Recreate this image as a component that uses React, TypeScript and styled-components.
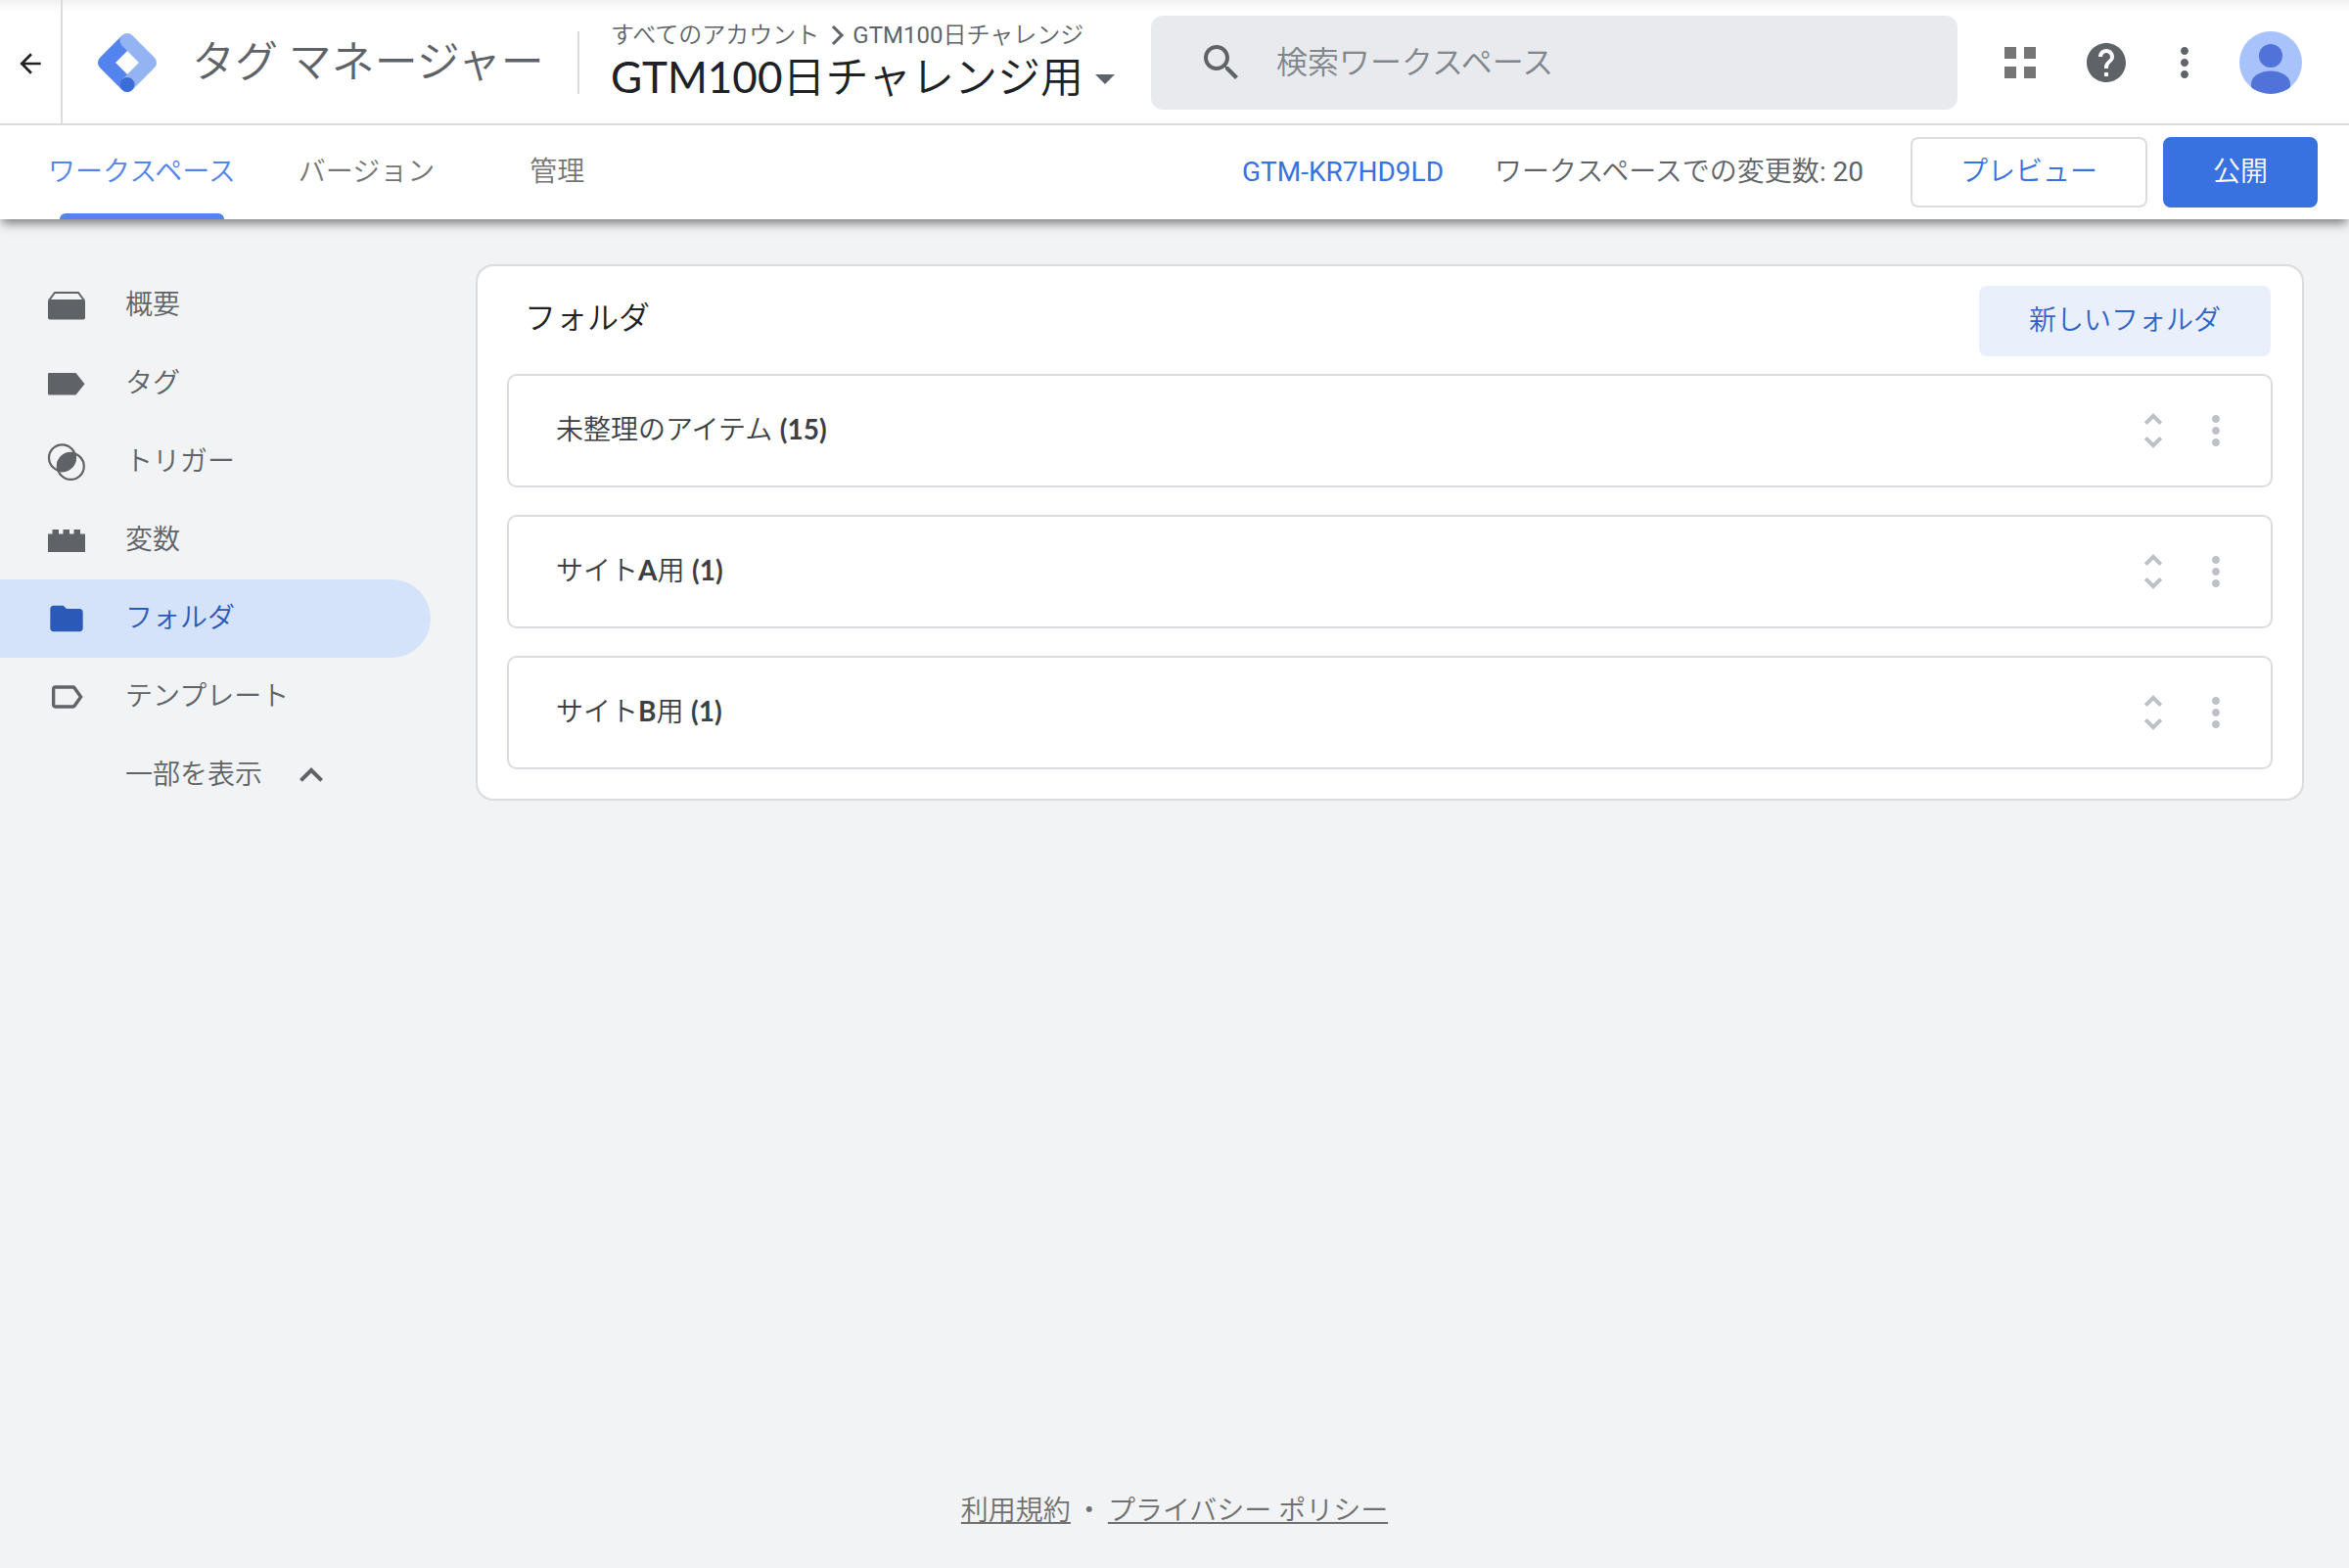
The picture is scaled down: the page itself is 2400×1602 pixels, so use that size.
import React from "react";
import styled, { createGlobalStyle } from "styled-components";

const color = {
  page: "#f1f3f4",
  line: "#dadce0",
  text: "#5f6368",
  muted: "#757575",
  strong: "#202124",
  row: "#3c4043",
  faint: "#bdc1c6",
  accent: "#5383ec",
  link: "#3871e0",
};

const sans = `Roboto, "Noto Sans CJK JP", sans-serif`;
const display = `Lato, "Noto Sans CJK JP", sans-serif`;

const GlobalStyle = createGlobalStyle`
  * { box-sizing: border-box; }
  body {
    margin: 0;
    background: ${color.page};
    color: ${color.text};
    font-family: ${sans};
    font-size: 28px;
    font-weight: 350;
    line-height: 40px;
  }
  button, input { font: inherit; color: inherit; }
  h1, h2, p, ul { margin: 0; padding: 0; font: inherit; }
  ul { list-style: none; }
  a { color: inherit; text-decoration: none; }
  svg { display: block; fill: currentColor; flex: none; }
`;

const Page = styled.div`
  display: flex;
  flex-direction: column;
  min-height: 100vh;
`;

const Latin = styled.span<{ $weight: number }>`
  font-weight: ${(p) => p.$weight};
`;

/* Japanese stays light, Latin runs take their own weight. */
function Mixed({ text, weight = 400 }: { text: string; weight?: number }) {
  return (
    <>
      {text.split(/([\x21-\x7e]+)/).map((part, i) =>
        i % 2 ? (
          <Latin key={i} $weight={weight}>
            {part}
          </Latin>
        ) : (
          part
        )
      )}
    </>
  );
}

/* ---------- header ---------- */

const Top = styled.div`
  position: relative;
  background: #fff;
  box-shadow: 0 6px 10px -2px rgba(0, 0, 0, 0.5);
`;

const AppBar = styled.header`
  display: flex;
  align-items: center;
  height: 128px;
  padding: 2px 48px 0 0;
  border-bottom: 2px solid ${color.line};
  background: linear-gradient(#f1f1f1, #fff 12px);
`;

const IconButton = styled.button<{ $width?: number; $color?: string }>`
  display: flex;
  align-items: center;
  justify-content: center;
  flex: none;
  width: ${(p) => p.$width ?? 48}px;
  height: 48px;
  padding: 0;
  border: 0;
  background: none;
  color: ${(p) => p.$color ?? color.text};
  cursor: pointer;
`;

const BackCell = styled.div`
  display: flex;
  align-items: center;
  align-self: stretch;
  width: 64px;
  margin-top: -2px;
  padding-top: 4px;
  border-right: 2px solid ${color.line};
`;

const Brand = styled.a`
  display: flex;
  align-items: center;
  gap: 36px;
  width: 528px;
  height: 64px;
  padding-left: 36px;
  border-right: 2px solid ${color.line};
  font-size: 44px;
  white-space: nowrap;
`;

const Account = styled.div`
  flex: none;
  width: 584px;
  padding: 0 0 4px 32px;
  white-space: nowrap;
`;

const Crumbs = styled.nav`
  display: flex;
  align-items: center;
  font-size: 24px;
  line-height: 32px;
`;

const Container = styled.button`
  display: flex;
  align-items: center;
  gap: 12px;
  padding: 0;
  border: 0;
  background: none;
  color: ${color.strong};
  font-family: ${display};
  font-size: 44px;
  line-height: 52px;
  cursor: pointer;
  svg {
    margin-top: 6px;
    color: ${color.text};
  }
`;

const Search = styled.label`
  display: flex;
  align-items: center;
  flex: 1;
  gap: 32px;
  height: 96px;
  padding: 0 48px;
  border-radius: 12px;
  background: #e8eaed;
`;

const SearchInput = styled.input`
  flex: 1;
  min-width: 0;
  padding: 0;
  border: 0;
  outline: 0;
  background: none;
  font-size: 32px;
  &::placeholder { color: #80868b; opacity: 1; }
`;

const Tools = styled.div`
  display: flex;
  align-items: center;
  gap: 32px;
  padding-left: 32px;
`;

const Avatar = styled.button`
  width: 64px;
  height: 64px;
  padding: 0;
  border: 0;
  border-radius: 50%;
  overflow: hidden;
  background: #a8c2fb;
  color: #5072d9;
  cursor: pointer;
`;

/* ---------- tab bar ---------- */

const TabBar = styled.div`
  display: flex;
  align-items: center;
  justify-content: space-between;
  height: 96px;
  padding: 0 32px 0 19px;
`;

const Tabs = styled.nav`
  display: flex;
  align-self: stretch;
  gap: 4px;
`;

const Tab = styled.a<{ $active?: boolean }>`
  position: relative;
  display: flex;
  justify-content: center;
  align-items: center;
  min-width: 182px;
  padding: 0 30px;
  color: ${(p) => (p.$active ? color.accent : color.muted)};
  &::after {
    content: "";
    display: ${(p) => (p.$active ? "block" : "none")};
    position: absolute;
    left: 42px;
    right: 42px;
    bottom: 0;
    height: 6px;
    border-radius: 6px 6px 0 0;
    background: ${color.accent};
  }
`;

const Actions = styled.div`
  display: flex;
  align-items: center;
  gap: 16px;
`;

const ContainerId = styled.a`
  margin-right: 36px;
  color: ${color.link};
  font-weight: 400;
`;

const Changes = styled.p`
  margin-right: 32px;
`;

const Button = styled.button<{ $kind: "outline" | "solid" | "tonal" }>`
  height: 72px;
  padding: 0 49px;
  border: 2px solid
    ${(p) => ({ outline: color.line, solid: color.link, tonal: "#e9f0fc" }[p.$kind])};
  border-radius: 8px;
  background: ${(p) => ({ outline: "#fff", solid: color.link, tonal: "#e9f0fc" }[p.$kind])};
  color: ${(p) => ({ outline: color.link, solid: "#fff", tonal: "#2f62cd" }[p.$kind])};
  white-space: nowrap;
  cursor: pointer;
`;

/* ---------- body ---------- */

const Body = styled.div`
  display: flex;
  align-items: flex-start;
  flex: 1;
  padding: 46px 46px 0 0;
`;

const Side = styled.nav`
  flex: none;
  width: 486px;
  padding-top: 2px;
`;

const SideItem = styled.a<{ $active?: boolean }>`
  display: flex;
  align-items: center;
  gap: 40px;
  width: 440px;
  height: 80px;
  padding-left: 48px;
  border-radius: 0 40px 40px 0;
  background: ${(p) => (p.$active ? "#d4e2fa" : "none")};
  color: ${(p) => (p.$active ? "#2b59b8" : color.text)};
`;

const SideToggle = styled.button`
  display: flex;
  align-items: center;
  gap: 26px;
  height: 80px;
  padding: 0 0 0 128px;
  border: 0;
  background: none;
  cursor: pointer;
`;

const Card = styled.main`
  flex: 1;
  min-width: 0;
  padding: 0 30px 30px;
  border: 2px solid ${color.line};
  border-radius: 18px;
  background: #fff;
`;

const CardHead = styled.div`
  display: flex;
  align-items: center;
  justify-content: space-between;
  padding: 20px 2px 18px 18px;
`;

const CardTitle = styled.h1`
  padding-bottom: 6px;
  color: ${color.strong};
  font-size: 32px;
`;

const Folders = styled.ul`
  display: flex;
  flex-direction: column;
  gap: 28px;
`;

const Folder = styled.li`
  display: flex;
  align-items: center;
  gap: 16px;
  height: 116px;
  padding: 0 32px 0 48px;
  border: 2px solid ${color.line};
  border-radius: 10px;
`;

const FolderName = styled.h2`
  flex: 1;
  padding-bottom: 4px;
  color: ${color.row};
  font-family: ${display};
`;

const Footer = styled.footer`
  display: flex;
  justify-content: center;
  padding: 40px 40px 38px;
  color: #707070;
  a {
    text-decoration: underline 2px;
    text-underline-offset: 2px;
    text-decoration-skip-ink: none;
  }
`;

const Dot = styled.span`
  width: 38px;
  text-align: center;
`;

/* ---------- drawings ---------- */

const Icon = ({ d, size = 48 }: { d: string; size?: number }) => (
  <svg width={size} height={size} viewBox="0 0 24 24" aria-hidden="true">
    <path d={d} />
  </svg>
);

const MORE =
  "M12 8c1.1 0 2-.9 2-2s-.9-2-2-2-2 .9-2 2 .9 2 2 2zm0 2c-1.1 0-2 .9-2 2s.9 2 2 2 2-.9 2-2-.9-2-2-2zm0 6c-1.1 0-2 .9-2 2s.9 2 2 2 2-.9 2-2-.9-2-2-2z";
const HELP =
  "M12 2C6.48 2 2 6.48 2 12s4.48 10 10 10 10-4.48 10-10S17.52 2 12 2zm1 17h-2v-2h2v2zm2.07-7.75l-.9.92C13.45 12.9 13 13.5 13 15h-2v-.5c0-1.1.45-2.1 1.17-2.83l1.24-1.26c.37-.36.59-.86.59-1.41 0-1.1-.9-2-2-2s-2 .9-2 2H8c0-2.21 1.79-4 4-4s4 1.79 4 4c0 .88-.36 1.68-.93 2.25z";
const SEARCH =
  "M15.5 14h-.79l-.28-.27C15.41 12.59 16 11.11 16 9.5 16 5.91 13.09 3 9.5 3S3 5.91 3 9.5 5.91 16 9.5 16c1.61 0 3.09-.59 4.23-1.57l.27.28v.79l5 4.99L20.49 19l-4.99-5zm-6 0C7.01 14 5 11.99 5 9.5S7.01 5 9.5 5 14 7.01 14 9.5 11.99 14 9.5 14z";
const BACK = "M20 11H7.83l5.59-5.59L12 4l-8 8 8 8 1.41-1.41L7.83 13H20v-2z";
const UNFOLD =
  "M12 5.83L15.17 9l1.41-1.41L12 3 7.41 7.59 8.83 9 12 5.83zm0 12.34L8.83 15l-1.41 1.41L12 21l4.59-4.59L15.17 15 12 18.17z";
const LESS = "M12 8l-6 6 1.41 1.41L12 10.83l4.59 4.58L18 14z";
const FOLDER =
  "M10 4H4c-1.1 0-1.99.9-1.99 2L2 18c0 1.1.9 2 2 2h16c1.1 0 2-.9 2-2V8c0-1.1-.9-2-2-2h-8l-2-2z";
const LABEL =
  "M17.63 5.84C17.27 5.33 16.67 5 16 5L5 5.01C3.9 5.01 3 5.9 3 7v10c0 1.1.9 1.99 2 1.99L16 19c.67 0 1.27-.33 1.63-.84L22 12l-4.37-6.16zM16 17H5V7h11l3.55 5L16 17z";

const Logo = () => (
  <svg width="60" height="60" viewBox="0 0 60 60" aria-hidden="true">
    <g fill="none" strokeWidth="15" strokeLinejoin="round">
      <path d="M30 52.5L7.5 30 30 7.5" stroke="#5383ec" />
      <path d="M30 7.5L52.5 30 30 52.5" stroke="#93b3f2" strokeLinecap="round" />
    </g>
    <circle cx="30" cy="52.5" r="7.5" fill="#3b6dd8" />
  </svg>
);

const Apps = () => (
  <svg width="32" height="32" viewBox="0 0 32 32" aria-hidden="true">
    <path d="M0 0h12v12H0zM20 0h12v12H20zM0 20h12v12H0zM20 20h12v12H20z" />
  </svg>
);

const Person = () => (
  <svg width="64" height="64" viewBox="0 0 64 64" aria-hidden="true">
    <circle cx="32" cy="25" r="12" />
    <path d="M12 64V54c0-8 9-13.500 20-13.500S52 46 52 54v10z" />
  </svg>
);

const Chevron = () => (
  <svg width="34" height="24" viewBox="0 0 34 24" aria-hidden="true">
    <path d="M14 3l9 9-9 9" fill="none" stroke="currentColor" strokeWidth="3" />
  </svg>
);

const Caret = () => (
  <svg width="20" height="10" viewBox="0 0 20 10" aria-hidden="true">
    <path d="M0 0h20L10 10z" />
  </svg>
);

const SideIcon = ({ children }: { children: React.ReactNode }) => (
  <svg width="40" height="40" viewBox="0 0 40 40" aria-hidden="true">
    {children}
  </svg>
);

const Overview = () => (
  <SideIcon>
    <rect x="1" y="14" width="38" height="20.500" rx="2" />
    <path d="M2 15L8 7h24l6 8" fill="none" stroke="currentColor" strokeWidth="2" />
  </SideIcon>
);

const TagIcon = () => (
  <SideIcon>
    <path d="M2 9h27.500L38.500 20.300 29.500 31.500H2a1 1 0 0 1-1-1V10a1 1 0 0 1 1-1z" />
  </SideIcon>
);

const Trigger = () => (
  <SideIcon>
    <g fill="none" stroke="currentColor" strokeWidth="2.200">
      <circle cx="15.500" cy="15.800" r="13.500" />
      <circle cx="24.300" cy="24.400" r="13.500" />
    </g>
    <path d="M29 11A14.300 14.300 0 0 1 11 29 14.300 14.300 0 0 1 29 11z" />
  </SideIcon>
);

const Variable = () => (
  <SideIcon>
    <path d="M1 13.500h4.500V9H12v4.500h4.500V9H23v4.500h4.500V9H34v4.500h5V32H1z" />
  </SideIcon>
);

/* ---------- page ---------- */

const nav = [
  { label: "概要", icon: <Overview /> },
  { label: "タグ", icon: <TagIcon /> },
  { label: "トリガー", icon: <Trigger /> },
  { label: "変数", icon: <Variable /> },
  { label: "フォルダ", icon: <Icon d={FOLDER} size={40} />, active: true },
  { label: "テンプレート", icon: <Icon d={LABEL} size={40} /> },
];

const folders = ["未整理のアイテム (15)", "サイトA用 (1)", "サイトB用 (1)"];

export default function App() {
  return (
    <Page lang="ja">
      <GlobalStyle />
      <Top>
        <AppBar>
          <BackCell>
            <IconButton $width={62} $color="#202124" aria-label="戻る">
              <Icon d={BACK} size={32} />
            </IconButton>
          </BackCell>
          <Brand href="#home">
            <Logo />
            タグ マネージャー
          </Brand>
          <Account>
            <Crumbs>
              <a href="#accounts">すべてのアカウント</a>
              <Chevron />
              <a href="#account">
                <Mixed text="GTM100日チャレンジ" />
              </a>
            </Crumbs>
            <Container>
              <span>
                <Mixed text="GTM100日チャレンジ用" />
              </span>
              <Caret />
            </Container>
          </Account>
          <Search>
            <Icon d={SEARCH} />
            <SearchInput type="search" aria-label="検索ワークスペース" placeholder="検索ワークスペース" />
          </Search>
          <Tools>
            <IconButton $width={64} $color={color.muted} aria-label="アプリ">
              <Apps />
            </IconButton>
            <IconButton aria-label="ヘルプ">
              <Icon d={HELP} />
            </IconButton>
            <IconButton aria-label="その他">
              <Icon d={MORE} />
            </IconButton>
            <Avatar aria-label="アカウント">
              <Person />
            </Avatar>
          </Tools>
        </AppBar>
        <TabBar>
          <Tabs>
            <Tab href="#workspace" $active>
              ワークスペース
            </Tab>
            <Tab href="#versions">バージョン</Tab>
            <Tab href="#admin">管理</Tab>
          </Tabs>
          <Actions>
            <ContainerId href="#container">GTM-KR7HD9LD</ContainerId>
            <Changes>
              <Mixed text="ワークスペースでの変更数: 20" />
            </Changes>
            <Button $kind="outline">プレビュー</Button>
            <Button $kind="solid">公開</Button>
          </Actions>
        </TabBar>
      </Top>
      <Body>
        <Side>
          {nav.map((item) => (
            <SideItem key={item.label} href={"#" + item.label} $active={item.active}>
              {item.icon}
              {item.label}
            </SideItem>
          ))}
          <SideToggle>
            一部を表示
            <Icon d={LESS} />
          </SideToggle>
        </Side>
        <Card>
          <CardHead>
            <CardTitle>フォルダ</CardTitle>
            <Button $kind="tonal">新しいフォルダ</Button>
          </CardHead>
          <Folders>
            {folders.map((name) => (
              <Folder key={name}>
                <FolderName>
                  <Mixed text={name} weight={700} />
                </FolderName>
                <IconButton $color={color.faint} aria-label="展開">
                  <Icon d={UNFOLD} />
                </IconButton>
                <IconButton $color={color.faint} aria-label="メニュー">
                  <Icon d={MORE} />
                </IconButton>
              </Folder>
            ))}
          </Folders>
        </Card>
      </Body>
      <Footer>
        <a href="#terms">利用規約</a>
        <Dot>・</Dot>
        <a href="#privacy">プライバシー ポリシー</a>
      </Footer>
    </Page>
  );
}
